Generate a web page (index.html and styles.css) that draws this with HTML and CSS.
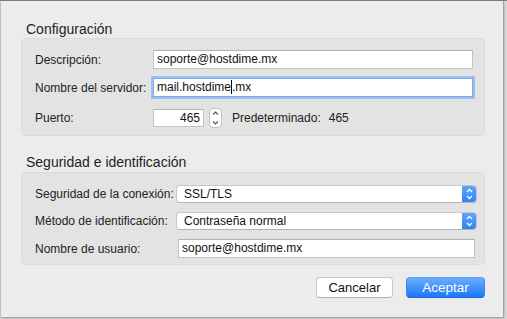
FILE: index.html
```html
<!DOCTYPE html>
<html lang="es">
<head>
<meta charset="utf-8">
<title>Configuración</title>
<link rel="stylesheet" href="styles.css">
</head>
<body>
<div class="screen">
  <div class="dialog">
    <h2 class="section-title">Configuración</h2>
    <div class="group group-server">
      <div class="row">
        <span class="label">Descripción:</span>
        <div class="field">soporte@hostdime.mx</div>
      </div>
      <div class="row">
        <span class="label">Nombre del servidor:</span>
        <div class="field focused">mail.hostdime<span class="caret"></span>.mx</div>
      </div>
      <div class="row row-port">
        <span class="label">Puerto:</span>
        <div class="port-controls">
          <div class="field port">465</div>
          <div class="stepper">
            <svg width="13" height="20" viewBox="0 0 13 20"><path d="M4 6.5 L6.5 4 L9 6.5" fill="none" stroke="#555" stroke-width="1.1"/><path d="M4 13.5 L6.5 16 L9 13.5" fill="none" stroke="#555" stroke-width="1.1"/></svg>
          </div>
          <span class="default-label">Predeterminado:</span>
          <span class="default-value">465</span>
        </div>
      </div>
    </div>

    <h2 class="section-title second">Seguridad e identificación</h2>
    <div class="group group-security">
      <div class="row">
        <span class="label">Seguridad de la conexión:</span>
        <div class="popup"><span class="popup-text">SSL/TLS</span><span class="popup-arrow"><svg width="15" height="18" viewBox="0 0 15 18"><path d="M5 7 L7.5 4.5 L10 7" fill="none" stroke="#fff" stroke-width="1.3"/><path d="M5 11 L7.5 13.5 L10 11" fill="none" stroke="#fff" stroke-width="1.3"/></svg></span></div>
      </div>
      <div class="row">
        <span class="label">Método de identificación:</span>
        <div class="popup"><span class="popup-text">Contraseña normal</span><span class="popup-arrow"><svg width="15" height="18" viewBox="0 0 15 18"><path d="M5 7 L7.5 4.5 L10 7" fill="none" stroke="#fff" stroke-width="1.3"/><path d="M5 11 L7.5 13.5 L10 11" fill="none" stroke="#fff" stroke-width="1.3"/></svg></span></div>
      </div>
      <div class="row">
        <span class="label">Nombre de usuario:</span>
        <div class="field user">soporte@hostdime.mx</div>
      </div>
    </div>

    <div class="buttons">
      <button class="btn btn-cancel">Cancelar</button>
      <button class="btn btn-ok">Aceptar</button>
    </div>
  </div>
</div>
</body>
</html>
```

FILE: styles.css
```css
* { box-sizing: border-box; }

html, body {
  margin: 0;
  padding: 0;
}

body {
  width: 507px;
  height: 319px;
  overflow: hidden;
  background: #d4d4d4;
  font-family: "Liberation Sans", Arial, sans-serif;
  color: #222;
}

.screen {
  width: 507px;
  height: 319px;
  border-top: 1px solid #7e7e7e;
  background: #d9d9d9;
}

.dialog {
  margin-left: 1px;
  width: 503px;
  height: 316px;
  background: #ececec;
  border-right: 1px solid #a3a3a3;
  box-shadow: 0 1px 2px rgba(0, 0, 0, 0.35);
  padding: 20px 17px 0 20px;
  display: flex;
  flex-direction: column;
}

.section-title {
  margin: 0 0 1px 0;
  padding-left: 5px;
  font-size: 14px;
  line-height: 16px;
  font-weight: normal;
  color: #1e1e1e;
}

.section-title.second {
  margin-top: 18px;
  margin-bottom: 2px;
}

.group {
  width: 464px;
  background: #e3e3e3;
  border: 1px solid #dadada;
  border-radius: 5px;
  display: flex;
  flex-direction: column;
}

.group-server {
  padding: 11px 11px 7px 13px;
  gap: 9px;
}

.group-server .row-port {
  margin-top: 2px;
}

.group-security {
  padding: 12px 9px 6px 13px;
  gap: 9px;
}

.row {
  display: grid;
  align-items: center;
  font-size: 12px;
}

.group-server .row { grid-template-columns: 118px 1fr; }
.group-security .row { grid-template-columns: 141px 1fr; }

.label {
  font-size: 12px;
  color: #222;
  white-space: nowrap;
}

.field {
  height: 19px;
  background: #fff;
  border: 1px solid #c4c4c4;
  border-top-color: #b2b2b2;
  padding: 0 3px;
  font-size: 12px;
  line-height: 17px;
  color: #111;
  white-space: nowrap;
}

.field.focused {
  border-color: #7ea9ec;
  box-shadow: 0 0 0 2px #9ec0f3;
}

.caret {
  display: inline-block;
  width: 1px;
  height: 14px;
  background: #000;
  vertical-align: -3px;
}

.field.user {
  margin-left: 2px;
}

.port-controls {
  display: flex;
  align-items: center;
  height: 20px;
}

.field.port {
  width: 51px;
  height: 18px;
  line-height: 16px;
  text-align: right;
  padding-right: 3px;
}

.stepper {
  width: 13px;
  height: 20px;
  margin-left: 5px;
  background: #fff;
  border: 1px solid #c2c2c2;
  border-radius: 4px;
  display: flex;
  align-items: center;
  justify-content: center;
  overflow: hidden;
}

.stepper svg {
  display: block;
  flex: none;
}

.default-label {
  margin-left: 10px;
  font-size: 12px;
}

.default-value {
  margin-left: 8px;
  font-size: 12px;
}

.popup {
  height: 18px;
  background: #fff;
  border: 1px solid #c6c6c6;
  border-bottom-color: #b3b3b3;
  border-radius: 4px;
  display: flex;
  align-items: stretch;
  overflow: hidden;
  margin-right: -2px;
}

.popup-text {
  flex: 1;
  padding-left: 7px;
  font-size: 12px;
  line-height: 16px;
  color: #111;
}

.popup-arrow {
  width: 15px;
  background: linear-gradient(#62a6fb, #2a83f8);
  display: flex;
  align-items: center;
  justify-content: center;
  margin: -1px -1px -1px 0;
  border-radius: 0 4px 4px 0;
}

.popup-arrow svg { display: block; }

.buttons {
  display: flex;
  justify-content: flex-end;
  gap: 13px;
  margin-top: 12px;
  width: 464px;
}

.btn {
  height: 21px;
  font-family: "Liberation Sans", Arial, sans-serif;
  font-size: 13px;
  line-height: 19px;
  padding: 0;
  border-radius: 4px;
  cursor: default;
}

.btn-cancel {
  width: 77px;
  background: #fff;
  color: #111;
  border: 1px solid #c8c8c8;
  border-bottom-color: #b0b0b0;
}

.btn-ok {
  width: 79px;
  font-size: 13.5px;
  background: linear-gradient(#6aaefd, #1c78f7);
  color: #fff;
  border: 1px solid #3c87f2;
  border-top-color: #5aa2fb;
  border-bottom-color: #1a66d8;
}
```
